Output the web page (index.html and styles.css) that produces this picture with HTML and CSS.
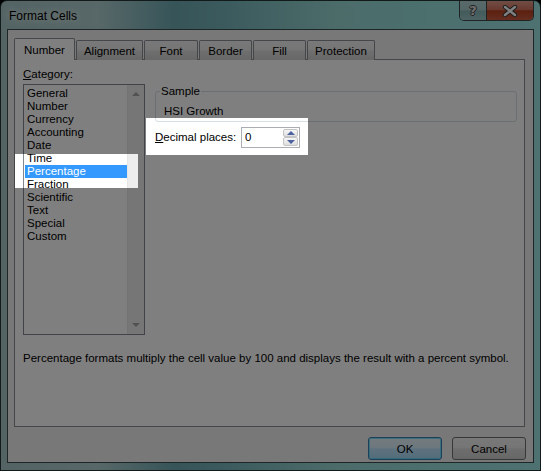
FILE: index.html
```html
<!DOCTYPE html>
<html>
<head>
<meta charset="utf-8">
<title>Format Cells</title>
<link rel="stylesheet" href="styles.css">
</head>
<body>
<div class="window">
  <div class="titlebar">
    <span class="title">Format Cells</span>
    <div class="caps">
      <div class="cap help"><span class="qmark">?</span></div>
      <div class="cap close">
        <svg width="16" height="12" viewBox="0 0 16 12"><path d="M3 2 L13 10 M13 2 L3 10" stroke="#3a3a3a" stroke-width="4.4" stroke-linecap="round"/><path d="M3 2 L13 10 M13 2 L3 10" stroke="#ffffff" stroke-width="2.4" stroke-linecap="round"/></svg>
      </div>
    </div>
  </div>
  <div class="client">
    <div class="tabs">
      <div class="tab sel w-num">Number</div>
      <div class="tab w-align">Alignment</div>
      <div class="tab w-font">Font</div>
      <div class="tab w-border">Border</div>
      <div class="tab w-fill">Fill</div>
      <div class="tab w-prot">Protection</div>
    </div>
    <div class="panel">
      <div class="cols">
        <div class="leftcol">
          <div class="lbl"><u>C</u>ategory:</div>
          <div class="listbox">
            <ul class="items">
              <li>General</li>
              <li>Number</li>
              <li>Currency</li>
              <li>Accounting</li>
              <li>Date</li>
              <li>Time</li>
              <li class="sel">Percentage</li>
              <li>Fraction</li>
              <li>Scientific</li>
              <li>Text</li>
              <li>Special</li>
              <li>Custom</li>
            </ul>
            <div class="vscroll">
              <span class="arr up"></span>
              <span class="arr down"></span>
            </div>
          </div>
        </div>
        <div class="rightcol">
          <fieldset class="sample">
            <legend>Sample</legend>
            <div class="sample-val">HSI Growth</div>
          </fieldset>
          <div class="decrow">
            <label class="declbl"><u>D</u>ecimal places:</label>
            <div class="spin">
              <span class="val">0</span>
              <div class="spinbtns">
                <div class="sb up"><span class="tri-up"></span></div>
                <div class="sb down"><span class="tri-down"></span></div>
              </div>
            </div>
          </div>
        </div>
      </div>
      <p class="desc">Percentage formats multiply the cell value by 100 and displays the result with a percent symbol.</p>
    </div>
    <div class="buttons">
      <button class="btn default">OK</button>
      <button class="btn">Cancel</button>
    </div>
  </div>
</div>
<div class="dim"></div>
</body>
</html>
```

FILE: styles.css
```css
* { box-sizing: border-box; }
html, body { margin: 0; padding: 0; }
body {
  width: 541px;
  height: 471px;
  overflow: hidden;
  position: relative;
  font-family: "Liberation Sans", Arial, sans-serif;
  font-size: 11.5px;
  color: #000;
  background: #000;
}

.window {
  width: 541px;
  height: 471px;
  display: flex;
  flex-direction: column;
  border: 1px solid #243434;
  border-radius: 7px 7px 0 0;
  background:
    linear-gradient(90deg, #a8c8c8 0%, #b0d0d0 18%, #6eaab2 32%, #78b6bc 42%, #98d8d4 62%, #96e0dc 80%, #9ce2e2 100%);
}

.titlebar {
  height: 28px;
  display: flex;
  align-items: flex-start;
  flex: none;
}
.title {
  padding: 7px 0 0 8px;
  line-height: 16px;
  font-size: 12px;
  text-shadow: 0 0 6px rgba(255,255,255,0.8), 0 0 10px rgba(255,255,255,0.5);
}
.caps {
  margin-left: auto;
  margin-right: 6px;
  display: flex;
  height: 20px;
  border: 1px solid #404848;
  border-top: none;
  border-radius: 0 0 5px 5px;
  overflow: hidden;
}
.cap {
  display: flex;
  align-items: center;
  justify-content: center;
}
.help {
  width: 27px;
  border-right: 1px solid #404848;
  background: linear-gradient(#b4d4d4 0%, #a8cccc 48%, #86b6b8 52%, #9cc6c8 100%);
}
.qmark {
  font-family: "DejaVu Sans", sans-serif;
  font-weight: bold;
  font-size: 13px;
  color: #e0e0e0;
  text-shadow: 1px 0 0 #404040, -1px 0 0 #404040, 0 1px 0 #404040, 0 -1px 0 #404040;
}
.close {
  width: 46px;
  background: linear-gradient(#e09c8a 0%, #d47460 45%, #b8401e 52%, #ca5c42 100%);
}

.client {
  flex: 1;
  margin: 0 6px 7px 6px;
  border: 1px solid #3c4c50;
  background: #f0f0f0;
  padding: 8px 7px 0 6px;
  display: flex;
  flex-direction: column;
}

.tabs {
  display: flex;
  align-items: flex-end;
  height: 22px;
  position: relative;
  z-index: 1;
}
.tab {
  height: 20px;
  margin-left: 1px;
  border: 1px solid #898c95;
  border-bottom: none;
  border-radius: 2px 2px 0 0;
  background: linear-gradient(#f2f2f2 0%, #ebebeb 45%, #dddddd 55%, #cfcfcf 100%);
  text-align: center;
  padding-top: 2px;
  line-height: 16px;
}
.tab.sel {
  height: 22px;
  margin-left: 0;
  background: #ffffff;
  padding-top: 3px;
}
.w-num { width: 61px; }
.w-align { width: 67px; }
.w-font { width: 54px; }
.w-border { width: 53px; }
.w-fill { width: 53px; }
.w-prot { width: 68px; }

.panel {
  margin-top: -1px;
  width: 511px;
  height: 368px;
  border: 1px solid #898c95;
  background: #ffffff;
  padding: 7px 0 0 8px;
}
.cols { display: flex; }
.leftcol { width: 122px; }
.lbl { line-height: 15px; height: 15px; margin-bottom: 2px; }

.listbox {
  width: 122px;
  height: 251px;
  border: 1px solid #828790;
  display: flex;
}
.items {
  list-style: none;
  margin: 0;
  padding: 2px 0 0 1px;
  width: 103px;
}
.items li {
  height: 13px;
  line-height: 13px;
  padding-left: 2px;
  white-space: nowrap;
}
.items li.sel { background: #3399ff; color: #ffffff; }
.vscroll {
  width: 17px;
  background: #ededed;
  border-left: 1px solid #e6e6e6;
  display: flex;
  flex-direction: column;
  justify-content: space-between;
  align-items: center;
  padding: 7px 0 7px;
}
.arr { width: 0; height: 0; border-left: 4px solid transparent; border-right: 4px solid transparent; }
.arr.up { border-bottom: 4px solid #a4a4a4; }
.arr.down { border-top: 4px solid #a4a4a4; }

.rightcol { margin-left: 10px; margin-top: 17px; width: 362px; }
.sample {
  margin: 0;
  width: 362px;
  border: 1px solid #d5dfe5;
  border-radius: 3px;
  padding: 0 0 2px 8px;
  min-inline-size: 0;
}
.sample legend {
  padding: 0 1px;
  margin-left: -4px;
  line-height: 15px;
}
.sample-val { margin-top: 5px; line-height: 15px; }

.decrow { margin-top: 5px; display: flex; align-items: center; }
.declbl { width: 86px; line-height: 15px; }
.spin {
  width: 59px;
  height: 21px;
  border: 1px solid #abadb3;
  display: flex;
  align-items: center;
  background: #fff;
}
.val { flex: 1; padding-left: 3px; line-height: 15px; }
.spinbtns {
  width: 15px;
  margin-right: 1px;
  display: flex;
  flex-direction: column;
}
.sb {
  border: 1px solid #c4c4c4;
  border-radius: 2px;
  background: linear-gradient(#f6f6f6, #dedede);
  display: flex;
  align-items: center;
  justify-content: center;
}
.sb.up { height: 8px; }
.sb.down { height: 9px; }
.tri-up, .tri-down { width: 0; height: 0; border-left: 4px solid transparent; border-right: 4px solid transparent; }
.tri-up { border-bottom: 4px solid #4c62a0; }
.tri-down { border-top: 4px solid #4c62a0; }

.desc { margin: 16px 0 0 0; line-height: 15px; white-space: nowrap; }

.buttons {
  margin-top: 10px;
  display: flex;
  justify-content: flex-end;
  gap: 10px;
}
.btn {
  width: 74px;
  height: 23px;
  border: 1px solid #707070;
  border-radius: 3px;
  background: linear-gradient(#f2f2f2 0%, #ebebeb 45%, #dddddd 52%, #cfcfcf 100%);
  font: inherit;
  color: #000;
  padding: 0;
}
.btn.default {
  border-color: #3c7fb1;
  box-shadow: inset 0 0 0 1px rgba(72, 216, 251, 0.7);
  background: linear-gradient(#eaf6fd 0%, #d9f0fc 45%, #bee6fd 52%, #a7d9f5 100%);
}

.dim {
  position: absolute;
  z-index: 10;
  left: 0;
  top: 0;
  width: 541px;
  height: 471px;
  background: rgba(0, 0, 0, 0.5);
  clip-path: path(evenodd, "M0 0H541V471H0Z M15 154H138V188H15Z M146 118H308V155H146Z");
  pointer-events: none;
}
```
